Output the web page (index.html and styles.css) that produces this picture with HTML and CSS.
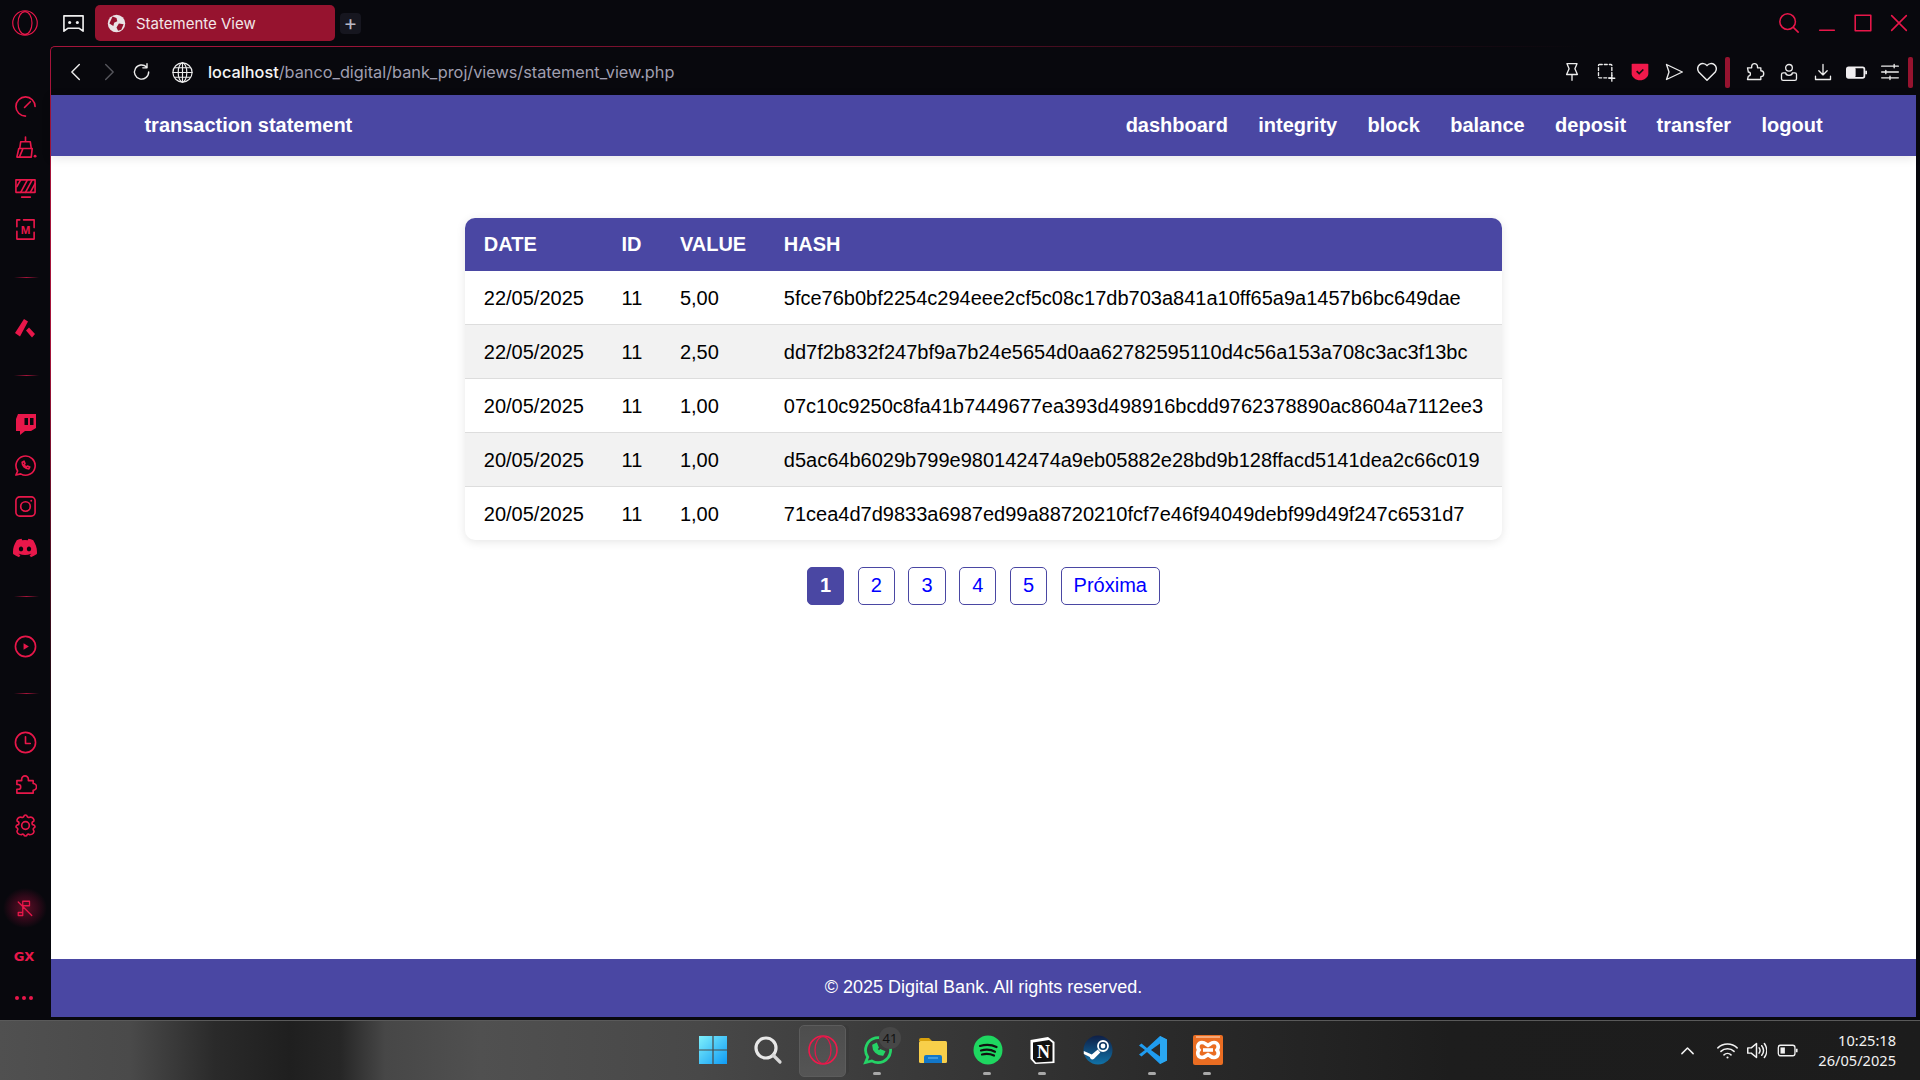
FILE: index.html
```html
<!DOCTYPE html>
<html lang="pt-BR">
<head>
  <meta charset="UTF-8">
  <title>Statemente View</title>
  <link rel="stylesheet" href="styles.css">
</head>
<body>
  <!-- Barra de abas -->
  <div class="tabbar">
    <svg class="ic logo" viewBox="0 0 24 24"><circle cx="12" cy="12" r="10.5"/><ellipse cx="12" cy="12" rx="6" ry="9.8"/></svg>
    <svg class="ic workspace" viewBox="0 0 24 24"><path d="M2 4h20v16l-4-3H6l-4 3z"/><circle cx="8" cy="11" r="1.6" class="solid"/><circle cx="16" cy="11" r="1.6" class="solid"/></svg>
    <div class="tab">
      <svg class="tab-icon" viewBox="0 0 24 24"><circle cx="12" cy="12" r="11" fill="#e9e3e5"/><path d="M7 3l5 2 1 4-4 2-1 4-5-3zM15 12l6 1-3 7-4 1-2-4z" fill="#96132f"/></svg>
      <span>Statemente View</span>
    </div>
    <div class="tab-add">+</div>
    <div class="win-controls">
      <svg class="ic win-search" viewBox="0 0 24 24"><circle cx="10.500" cy="10.500" r="8.500"/><path d="M17 17l5 5"/></svg>
      <svg class="ic" viewBox="0 0 24 24"><path d="M4 20h16"/></svg>
      <svg class="ic" viewBox="0 0 24 24"><rect x="3.500" y="3.500" width="17" height="17"/></svg>
      <svg class="ic" viewBox="0 0 24 24"><path d="M4 4l16 16M20 4L4 20"/></svg>
    </div>
  </div>

  <div class="shell">
    <!-- Barra lateral do navegador -->
    <aside class="sidebar">
      <div class="side-item"><svg class="ic" viewBox="0 0 24 24"><path d="M12 22A10 10 0 1 1 22 12"/><path d="M11 13l6-6"/></svg></div>
      <div class="side-item"><svg class="ic" viewBox="0 0 24 24"><path d="M12 1v5M7 6h10l1 7H6zM5 13h14l-1 9H3zM9 14l-3 7"/><circle cx="22" cy="21" r="1.500" class="solid"/></svg></div>
      <div class="side-item"><svg class="ic" viewBox="0 0 24 24"><rect x="2" y="3" width="20" height="13"/><path d="M7 16l7-13M12 16l7-13M3 10l4-7M17 16l5-9M8 21h9"/></svg></div>
      <div class="side-item"><svg class="ic" viewBox="0 0 24 24"><path d="M6 2H3v7M3 14v8h18v-7M21 10V2H10"/><text x="12" y="16.500" class="chip-m">M</text></svg></div>
      <div class="side-line line-a"></div>
      <div class="side-item"><svg class="ic-fill" viewBox="0 0 24 24"><path d="M2 17L11 3l4 2.500-8 15zM13 14.500l3-3 6 6.500-3 3.500z"/></svg></div>
      <div class="side-line line-b"></div>
      <div class="side-item wide first-after"><svg class="ic-fill" viewBox="0 0 24 24"><path fill-rule="evenodd" d="M5 2h18v14l-5 3h-6l-5 4v-4H3V7zM11.500 6v7h3.500V6zM17 6v7h3.500V6z"/></svg></div>
      <div class="side-item wide"><svg class="ic" viewBox="0 0 24 24"><path d="M2 22l1.800-4.300A10 10 0 1 1 7 20.700z"/><path d="M8.500 8.500c0 4 3 7 7 7l1-2-2.500-1-1 1c-1-.5-2-1.500-2.500-2.500l1-1-1-2.500z"/></svg></div>
      <div class="side-item wide"><svg class="ic" viewBox="0 0 24 24"><rect x="2" y="2" width="20" height="20" rx="4"/><circle cx="12" cy="12" r="5"/><circle cx="18" cy="6" r="1" class="solid"/></svg></div>
      <div class="side-item wide"><svg class="ic-fill" viewBox="0 0 24 24"><path d="M20.317 4.370a19.791 19.791 0 0 0-4.885-1.515.074.074 0 0 0-.079.037c-.21.375-.444.864-.608 1.250a18.270 18.270 0 0 0-5.487 0 12.640 12.640 0 0 0-.617-1.250.077.077 0 0 0-.079-.037A19.736 19.736 0 0 0 3.677 4.370a.07.07 0 0 0-.032.027C.533 9.046-.32 13.580.099 18.057a.082.082 0 0 0 .031.057 19.900 19.900 0 0 0 5.993 3.030.078.078 0 0 0 .084-.028 14.090 14.090 0 0 0 1.226-1.994.076.076 0 0 0-.041-.106 13.107 13.107 0 0 1-1.872-.892.077.077 0 0 1-.008-.128 10.200 10.200 0 0 0 .372-.292.074.074 0 0 1 .077-.01c3.928 1.793 8.180 1.793 12.062 0a.074.074 0 0 1 .078.01c.12.098.246.198.373.292a.077.077 0 0 1-.006.127 12.299 12.299 0 0 1-1.873.892.077.077 0 0 0-.041.107c.36.698.772 1.362 1.225 1.993a.076.076 0 0 0 .084.028 19.839 19.839 0 0 0 6.002-3.030.077.077 0 0 0 .032-.054c.5-5.177-.838-9.674-3.549-13.660a.061.061 0 0 0-.031-.03zM8.020 15.330c-1.183 0-2.157-1.085-2.157-2.419 0-1.333.956-2.419 2.157-2.419 1.210 0 2.176 1.096 2.157 2.420 0 1.333-.956 2.418-2.157 2.418zm7.975 0c-1.183 0-2.157-1.085-2.157-2.419 0-1.333.955-2.419 2.157-2.419 1.210 0 2.176 1.096 2.157 2.420 0 1.333-.946 2.418-2.157 2.418z"/></svg></div>
      <div class="side-line line-c"></div>
      <div class="side-item play"><svg class="ic" viewBox="0 0 24 24"><circle cx="12" cy="12" r="10.500"/><path d="M10 8.500v7l5.500-3.500z" class="solid"/></svg></div>
      <div class="side-line line-d"></div>
      <div class="side-item wide clock"><svg class="ic" viewBox="0 0 24 24"><circle cx="12" cy="12" r="10.500"/><path d="M12 6v7h5"/></svg></div>
      <div class="side-item wide"><svg class="ic" viewBox="0 0 24 24"><path d="M3 8h5V6.500a3.500 3.500 0 0 1 7 0V8h5v3a3.500 3.500 0 0 1 0 7v3H3v-4h1.500a2.500 2.500 0 0 0 0-5H3z"/></svg></div>
      <div class="side-item wide"><svg class="ic" viewBox="0 0 24 24"><path d="M10.325 2.317c.426-1.756 2.924-1.756 3.350 0a1.724 1.724 0 0 0 2.573 1.066c3.543-.94 5.310 2.826 4.370 4.370a1.724 1.724 0 0 0 0 3.572c1.756 1.426 1.756 2.924 0 3.350a1.724 1.724 0 0 0 0 2.573c.94 1.543-.826 4.310-4.370 4.370a1.724 1.724 0 0 0-2.572 0c-.426 1.756-2.924 1.756-3.350 0a1.724 1.724 0 0 0-2.573 0c-3.543-.06-5.310-2.826-4.370-4.370a1.724 1.724 0 0 0 0-2.572c-1.756-.426-1.756-1.924 0-3.350a1.724 1.724 0 0 0 0-3.573c-.94-1.543.826-5.310 4.370-4.370a1.724 1.724 0 0 0 2.572-1.065z"/><circle cx="12" cy="12" r="4"/></svg></div>
      <div class="side-bottom">
        <div class="side-music"><svg class="ic" viewBox="0 0 24 24"><path d="M9 18V3h9v6H9M3 18h6v4H3zM3 4l18 18"/></svg></div>
        <div class="side-item side-gx">GX</div>
        <div class="side-item side-dots"><i></i><i></i><i></i></div>
      </div>
    </aside>

    <div class="frame">
      <!-- Barra de endereco -->
      <div class="addressbar">
        <div class="addr-btn"><svg class="ic" viewBox="0 0 24 24"><path d="M16 3l-9 9 9 9"/></svg></div>
        <div class="addr-btn off"><svg class="ic" viewBox="0 0 24 24"><path d="M8 3l9 9-9 9"/></svg></div>
        <div class="addr-btn"><svg class="ic" viewBox="0 0 24 24"><path d="M20 12a8.500 8.500 0 1 1-2.500-6M18 2v5h-5"/></svg></div>
        <svg class="ic addr-globe" viewBox="0 0 24 24"><circle cx="12" cy="12" r="10"/><ellipse cx="12" cy="12" rx="4.500" ry="10"/><path d="M12 2v20M2 12h20M3.500 7h17M3.500 17h17"/></svg>
        <div class="url"><b>localhost</b>/banco_digital/bank_proj/views/statement_view.php</div>
        <div class="addr-tools">
          <div class="tool"><svg class="ic" viewBox="0 0 24 24"><path d="M6 2h12l-2.500 6 3 7h-13l3-7zM12 15v7"/></svg></div>
          <div class="tool"><svg class="ic dashed" viewBox="0 0 24 24"><rect x="3" y="3" width="16" height="16" rx="1"/><path d="M19 16v7M15.500 19.500h7" class="plain"/></svg></div>
          <div class="tool"><svg viewBox="0 0 24 24" class="tool-svg"><path d="M3 2h18a1 1 0 0 1 1 1v11c0 4-5 8-10 8S2 18 2 14V3a1 1 0 0 1 1-1z" fill="#f0194b"/><path d="M8 11l3 3 5-5" fill="none" stroke="#111" stroke-width="2"/></svg></div>
          <div class="tool"><svg class="ic" viewBox="0 0 24 24"><path d="M3 3l19 9-19 9 3-9z"/></svg></div>
          <div class="tool"><svg class="ic heart" viewBox="0 0 24 24"><path d="M12 21L3 12a5.500 5.500 0 0 1 9-7 5.500 5.500 0 0 1 9 7z"/></svg></div>
          <div class="addr-sep first"></div>
          <div class="tool"><svg class="ic" viewBox="0 0 24 24"><path d="M3 7h5V5.500a3.500 3.500 0 0 1 7 0V7h4v3.500a3.500 3.500 0 0 1 0 7V21H3l1-4a2.500 2.500 0 0 0 0-5L3 7z"/></svg></div>
          <div class="tool"><svg class="ic" viewBox="0 0 24 24"><circle cx="12" cy="7" r="4"/><path d="M8 13H5c-1 0-2 1-2 2v5c0 1 1 2 2 2h14c1 0 2-1 2-2v-5c0-1-1-2-2-2h-3c0 2-1.500 3-4 3s-4-1-4-3z"/></svg></div>
          <div class="tool"><svg class="ic" viewBox="0 0 24 24"><path d="M12 3v12M7 10.500l5 5 5-5M3 17v4h18v-4"/></svg></div>
          <div class="tool"><svg viewBox="0 0 24 24" class="tool-battery"><rect x="1" y="6" width="20" height="12" rx="2" fill="none" stroke="#f0eef0" stroke-width="2"/><rect x="1" y="6" width="10" height="12" rx="2" fill="#f0eef0"/><rect x="22" y="10" width="2" height="4" fill="#f0eef0"/></svg></div>
          <div class="tool"><svg class="ic" viewBox="0 0 24 24"><path d="M2 5h20M2 12h20M2 19h20"/><path d="M17 3v4M7 10v4M12 17v4"/></svg></div>
          <div class="addr-sep"></div>
        </div>
      </div>

      <header class="page-header">
        <div class="page-title">transaction statement</div>
        <nav class="page-nav">
          <span>dashboard</span>
          <span>integrity</span>
          <span>block</span>
          <span>balance</span>
          <span>deposit</span>
          <span>transfer</span>
          <span>logout</span>
        </nav>
      </header>

      <main class="page-main">
        <table class="statement">
          <thead>
            <tr><th>DATE</th><th>ID</th><th>VALUE</th><th>HASH</th></tr>
          </thead>
          <tbody>
            <tr><td>22/05/2025</td><td>11</td><td>5,00</td><td>5fce76b0bf2254c294eee2cf5c08c17db703a841a10ff65a9a1457b6bc649dae</td></tr>
            <tr><td>22/05/2025</td><td>11</td><td>2,50</td><td>dd7f2b832f247bf9a7b24e5654d0aa62782595110d4c56a153a708c3ac3f13bc</td></tr>
            <tr><td>20/05/2025</td><td>11</td><td>1,00</td><td>07c10c9250c8fa41b7449677ea393d498916bcdd9762378890ac8604a7112ee3</td></tr>
            <tr><td>20/05/2025</td><td>11</td><td>1,00</td><td>d5ac64b6029b799e980142474a9eb05882e28bd9b128ffacd5141dea2c66c019</td></tr>
            <tr><td>20/05/2025</td><td>11</td><td>1,00</td><td>71cea4d7d9833a6987ed99a88720210fcf7e46f94049debf99d49f247c6531d7</td></tr>
          </tbody>
        </table>
        <div class="pagination">
          <a href="#" class="current">1</a>
          <a href="#">2</a>
          <a href="#">3</a>
          <a href="#">4</a>
          <a href="#">5</a>
          <a href="#">Próxima</a>
        </div>
      </main>

      <footer class="page-footer">© 2025 Digital Bank. All rights reserved.</footer>
    </div>
  </div>

  <!-- Barra de tarefas -->
  <div class="taskbar">
    <div></div>
    <div class="task-apps">
      <div class="app">
        <svg viewBox="0 0 30 30" class="app-svg"><defs><linearGradient id="win" x1="0" y1="0" x2="1" y2="1"><stop offset="0" stop-color="#7ff0fb"/><stop offset="1" stop-color="#0f9bf5"/></linearGradient></defs><path d="M1 1h13.400v13.400H1zM15.600 1H29v13.400H15.600zM1 15.600h13.400V29H1zM15.600 15.600H29V29H15.600z" fill="url(#win)"/></svg>
      </div>
      <div class="app">
        <svg viewBox="0 0 30 30" class="app-svg"><circle cx="13" cy="13" r="10" fill="none" stroke="#e8e8e8" stroke-width="3.200"/><path d="M20 20l7 7" stroke="#d8d8d8" stroke-width="3.200" stroke-linecap="round"/></svg>
      </div>
      <div class="app app-open">
        <svg viewBox="0 0 30 30" class="app-svg"><circle cx="15" cy="15" r="14" fill="none" stroke="#f0194b" stroke-width="1.600"/><ellipse cx="15" cy="15" rx="8" ry="13.400" fill="none" stroke="#e0184a" stroke-width="1.300"/></svg>
      </div>
      <div class="app has-dot">
        <svg viewBox="0 0 24 24" class="app-svg wa"><path d="M2 22l1.800-4.300A10 10 0 1 1 7 20.700z"/><path d="M8.500 8.500c0 4 3 7 7 7l1-2-2.500-1-1 1c-1-.5-2-1.500-2.500-2.500l1-1-1-2.500z" fill="#25d366"/></svg>
        <span class="app-badge">41</span>
      </div>
      <div class="app">
        <svg viewBox="0 0 30 30" class="app-svg"><path d="M1 5a2 2 0 0 1 2-2h8l3 3h-13z" fill="#d9a10c"/><rect x="1" y="6" width="28" height="22" rx="1.500" fill="#f8cf4a"/><path d="M6 28v-6a2 2 0 0 1 2-2h14a2 2 0 0 1 2 2v6z" fill="#1277c9"/><path d="M10 23h10" stroke="#6fc0f2" stroke-width="1"/></svg>
      </div>
      <div class="app has-dot">
        <svg viewBox="0 0 30 30" class="app-svg"><circle cx="15" cy="15" r="14.500" fill="#1ed760"/><path d="M7 11c6-1.700 12-1.200 16.500 1M8 15.500c5-1.300 10-1 14 1.200M9 19.500c4.300-1 8-.8 12 1" fill="none" stroke="#111" stroke-width="2.200" stroke-linecap="round"/></svg>
      </div>
      <div class="app has-dot">
        <svg viewBox="0 0 30 30" class="app-svg"><path d="M2.500 5L20 2l6.500 5v21L7 29l-4.500-5z" fill="#fff"/><path d="M5 7.500L21 5l3.500 3V26.500L8 27.500 5 24z" fill="#111"/><text x="15.500" y="22.500" class="notion-n">N</text></svg>
      </div>
      <div class="app">
        <svg viewBox="0 0 30 30" class="app-svg"><defs><linearGradient id="steam" x1="0.500" y1="0" x2="0.500" y2="1"><stop offset="0" stop-color="#0f1f46"/><stop offset="1" stop-color="#1072a8"/></linearGradient></defs><circle cx="15" cy="15" r="14.500" fill="url(#steam)"/><circle cx="20" cy="11" r="5" fill="none" stroke="#fff" stroke-width="1.800"/><circle cx="20" cy="11" r="2.400" fill="#fff"/><path d="M0.800 16l8 3.500 6-5 2.500 3-6.500 6.500c-2 1-3.500 0-4-2l-6-3z" fill="#fff"/></svg>
      </div>
      <div class="app has-dot">
        <svg viewBox="0 0 30 30" class="app-svg"><path d="M22 1l7 3.500v21L22 29 9 17l-5.500 4.500L1 19.500 7 15 1 10.500l2.500-2L9 13z" fill="#1f9cf0"/><path d="M22 8.500L13 15l9 6.500z" fill="#2b2b2b"/><path d="M22 1l7 3.500v21L22 29z" fill="#2aa6f0"/></svg>
      </div>
      <div class="app has-dot">
        <svg viewBox="0 0 30 30" class="app-svg"><rect width="30" height="30" rx="2" fill="#ea6d22"/><rect x="3" y="1" width="24" height="2" fill="#f6a878"/><path d="M9 7.500c3 0 4 2 6 3 2-1 3-3 6-3 4 0 5.500 4.500 3 7.500 2.500 3 1 7.500-3 7.500-3 0-4-2-6-3-2 1-3 3-6 3-4 0-5.500-4.500-3-7.500-2.500-3-1-7.500 3-7.500z" fill="none" stroke="#fff" stroke-width="3.600"/><path d="M10 15h10" stroke="#fff" stroke-width="3.600"/></svg>
      </div>
    </div>
    <div class="tray">
      <svg class="ic tray-chevron" viewBox="0 0 24 24"><path d="M3 17l9-9 9 9"/></svg>
      <svg class="ic tray-wifi" viewBox="0 0 24 24"><path d="M1 9c6-6 16-6 22 0M4.500 13c4-4 11-4 15 0M8 17c2.200-2 5.800-2 8 0"/><circle cx="12" cy="20" r="1.200" class="solid"/></svg>
      <svg class="ic tray-sound" viewBox="0 0 24 24"><path d="M2 9h4l6-5v16l-6-5H2zM15 9c1.300 1.800 1.300 4.200 0 6M18 6.500c2.500 3.300 2.500 7.700 0 11M21 4c3.500 4.800 3.500 11.200 0 16"/></svg>
      <svg class="tray-battery" viewBox="0 0 24 24"><rect x="1.500" y="6" width="19" height="12" rx="2.500" fill="none" stroke="#f2f2f2" stroke-width="1.500"/><rect x="4" y="8.500" width="5" height="7" fill="#f2f2f2"/><rect x="21.500" y="10" width="2" height="4" fill="#f2f2f2"/></svg>
      <div class="tray-clock">
        <div>10:25:18</div>
        <div>26/05/2025</div>
      </div>
    </div>
  </div>
</body>
</html>
```

FILE: styles.css
```css
* {
  box-sizing: border-box;
}

body {
  margin: 0;
  width: 1920px;
  height: 1080px;
  display: flex;
  flex-direction: column;
  overflow: hidden;
  background: #08080d;
  font-family: 'Liberation Sans', Arial, sans-serif;
  color: #000;
}

/* iconos de linea */
.ic {
  width: 22px;
  height: 22px;
  fill: none;
  stroke: currentColor;
  stroke-width: 1.7;
  stroke-linejoin: round;
  stroke-linecap: round;
}

.ic .solid {
  fill: currentColor;
  stroke: none;
}

.ic-fill {
  width: 24px;
  height: 24px;
  fill: #e8174a;
}

/* barra de abas */
.tabbar {
  height: 46px;
  flex-shrink: 0;
  display: flex;
  align-items: center;
  color: #e8174a;
}

.logo {
  width: 28px;
  height: 28px;
  margin-left: 11px;
  stroke-width: 1;
}

.workspace {
  width: 23px;
  height: 23px;
  margin-left: 23px;
  color: #f0f0f0;
}

.tab {
  width: 240px;
  height: 36px;
  margin-left: 10px;
  padding-left: 12px;
  display: flex;
  align-items: center;
  gap: 10px;
  background: #96132f;
  border-radius: 5px;
  color: #f2e6e8;
  font-family: Inter, sans-serif;
  font-size: 15px;
}

.tab-icon {
  width: 19px;
  height: 19px;
}

.tab-add {
  width: 21px;
  height: 21px;
  margin-left: 5px;
  background: #16161f;
  border-radius: 4px;
  color: #b8b8c4;
  font-family: Inter, sans-serif;
  font-size: 21px;
  line-height: 19px;
  text-align: center;
}

.win-controls {
  margin-left: auto;
  margin-right: 10px;
  display: flex;
  gap: 14px;
}

.win-search {
  margin-right: 2px;
}

/* estructura */
.shell {
  flex: 1;
  display: flex;
  min-height: 0;
}

.sidebar {
  width: 50px;
  flex-shrink: 0;
  padding-top: 40px;
  padding-bottom: 2px;
  display: flex;
  flex-direction: column;
  color: #e8174a;
}

.side-item {
  height: 41px;
  display: flex;
  align-items: center;
  justify-content: center;
  flex-shrink: 0;
}

.side-item.wide {
  height: 41.5px;
}

.side-item .ic {
  width: 23px;
  height: 23px;
}

.side-line {
  height: 1px;
  width: 25px;
  margin-left: 14px;
  flex-shrink: 0;
  background: linear-gradient(90deg, transparent, #a5143a, transparent);
}

.line-a { margin-top: 27px; margin-bottom: 29px; }
.line-b { margin-top: 27px; margin-bottom: 27px; }
.line-c { margin-top: 27px; margin-bottom: 29px; }
.line-d { margin-top: 26px; margin-bottom: 28px; }

.chip-m {
  font-family: 'Liberation Sans', sans-serif;
  font-size: 12px;
  font-weight: bold;
  fill: #e8174a;
  stroke: none;
  text-anchor: middle;
}

.side-bottom {
  margin-top: auto;
}

.side-music {
  width: 44px;
  height: 40px;
  margin: 0 auto 8px;
  display: flex;
  align-items: center;
  justify-content: center;
  background: radial-gradient(closest-side, #5c0f24 0%, #33091a 55%, transparent 100%);
}

.side-music .ic {
  width: 18px;
  height: 18px;
}

.side-gx {
  font-family: 'DejaVu Sans', sans-serif;
  font-size: 13px;
  font-weight: bold;
  padding-right: 2px;
}

.side-dots {
  gap: 3px;
  padding-right: 2px;
}

.side-dots i {
  width: 4px;
  height: 4px;
  border-radius: 50%;
  background: #e8174a;
}

.frame {
  flex: 1;
  min-width: 0;
  display: flex;
  flex-direction: column;
  position: relative;
  border-top: 1px solid #a5143a;
  border-left: 1px solid #a5143a;
  border-top-left-radius: 5px;
  padding-bottom: 3px;
}

/* desvanecen la linea roja del marco */
.frame::before {
  content: "";
  position: absolute;
  top: -1px;
  left: 200px;
  right: 0;
  height: 1px;
  background: linear-gradient(90deg, rgba(8, 8, 13, 0), #08080d 80%);
}

.frame::after {
  content: "";
  position: absolute;
  left: -1px;
  top: 300px;
  bottom: 0;
  width: 1px;
  background: linear-gradient(rgba(8, 8, 13, 0), #08080d 60%);
}

.addressbar {
  height: 48px;
  flex-shrink: 0;
  display: flex;
  align-items: center;
  padding: 2px 7px 0 8px;
  color: #ececec;
}

.addr-btn {
  width: 33px;
  display: flex;
  justify-content: center;
}

.addr-btn .ic {
  width: 20px;
  height: 20px;
}

.addr-btn.off {
  color: #55555c;
}

.addr-globe {
  width: 23px;
  height: 23px;
  margin-left: 13px;
  stroke-width: 1.200;
}

.url {
  margin-left: 14px;
  font-family: Inter, sans-serif;
  font-size: 16.270px;
  color: #a09fb0;
}

.url b {
  font-weight: 500;
  color: #f5f5f5;
}

.addr-tools {
  margin-left: auto;
  display: flex;
  align-items: center;
}

.tool {
  width: 33.750px;
  display: flex;
  justify-content: center;
}

.tool .ic {
  width: 20px;
  height: 20px;
  stroke-width: 1.600;
}

.tool-svg {
  width: 20px;
  height: 20px;
}

.tool-battery {
  width: 21px;
  height: 21px;
}

.tool .heart {
  width: 22px;
  height: 22px;
}

.dashed rect {
  stroke-dasharray: 3.500 2.500;
}

.addr-sep {
  width: 5px;
  height: 31px;
  margin-left: 1px;
  background: #96132f;
  border-radius: 2px;
}

.addr-sep.first {
  margin-right: 8px;
}

.page-header {
  height: 61px;
  margin-right: 4px;
  flex-shrink: 0;
  display: flex;
  align-items: center;
  justify-content: space-between;
  padding: 0 5%;
  background: #4a47a3;
  box-shadow: 0 2px 10px rgba(0, 0, 0, 0.1);
  color: #fff;
  font-size: 20px;
  font-weight: bold;
  position: relative;
}

.page-nav {
  display: flex;
  gap: 30.400px;
}

.page-main {
  flex: 1;
  margin-right: 4px;
  padding-top: 62px;
  display: flex;
  flex-direction: column;
  align-items: center;
  background: #fff;
}

.statement {
  width: 1037px;
  border-collapse: collapse;
  border-radius: 10px;
  overflow: hidden;
  box-shadow: 0 2px 10px rgba(0, 0, 0, 0.1);
  font-size: 20px;
}

.statement th {
  padding: 15px 18.800px;
  background: #4a47a3;
  color: #fff;
  text-align: left;
}

.statement td {
  padding: 16px 18.800px 14px;
  border-bottom: 1px solid #ddd;
}

.statement tbody tr:nth-child(even) {
  background: #f2f2f2;
}

.statement tbody tr:last-child td {
  border-bottom: none;
}

.pagination {
  margin-top: 27px;
  display: flex;
  gap: 13.600px;
}

.pagination a {
  padding: 6px 12px 8px;
  line-height: 22px;
  font-size: 20px;
  color: #00f;
  text-decoration: none;
  border: 1px solid #4a47a3;
  border-radius: 5px;
}

.pagination .current {
  background: #4a47a3;
  color: #fff;
  font-weight: bold;
}

.page-footer {
  height: 58px;
  margin-right: 4px;
  flex-shrink: 0;
  display: flex;
  align-items: center;
  justify-content: center;
  padding-bottom: 2px;
  background: #4a47a3;
  color: #fff;
  font-size: 18px;
}

/* barra de tarefas */
.taskbar {
  height: 60px;
  flex-shrink: 0;
  display: grid;
  grid-template-columns: 1fr auto 1fr;
  align-items: center;
  border-top: 1px solid #5a5a5a;
  background: linear-gradient(90deg, #505050 0, #4a4a4a 130px, #2a2a2a 215px, #1f1f1f 290px, #262626 340px, #474747 385px, #505050 480px, #484848 700px, #3a3a3a 900px, #2b2b2b 1150px, #1d1d1d 1450px, #1c1c1c 100%);
}

.task-apps {
  display: flex;
}

.app {
  width: 55px;
  height: 59px;
  padding-bottom: 2px;
  display: flex;
  align-items: center;
  justify-content: center;
  position: relative;
}

.app-svg {
  width: 30px;
  height: 30px;
}

.wa {
  fill: none;
  stroke: #25d366;
  stroke-width: 2.200;
}

.app-open::before {
  content: "";
  position: absolute;
  left: 5px;
  top: 4px;
  width: 49px;
  height: 50px;
  background: #3a3a3a;
  border-radius: 5px;
  z-index: 0;
}

.app-open::after {
  content: "";
  position: absolute;
  left: 4px;
  top: 4px;
  width: 45px;
  height: 50px;
  background: linear-gradient(#4d4d4d, #555);
  border: 1px solid #5c5c5c;
  border-radius: 5px;
}

.app-open svg {
  position: relative;
  z-index: 1;
}

.has-dot::after {
  content: "";
  position: absolute;
  left: 23px;
  bottom: 5px;
  width: 8px;
  height: 3px;
  border-radius: 2px;
  background: #a8a8a8;
}

.app-badge {
  position: absolute;
  top: 6px;
  left: 29px;
  width: 22px;
  height: 22px;
  border-radius: 50%;
  background: #474747;
  color: #111;
  font-family: 'Noto Sans', sans-serif;
  font-size: 13px;
  line-height: 22px;
  text-align: center;
}

.notion-n {
  font-family: 'Liberation Serif', serif;
  font-size: 18px;
  font-weight: bold;
  fill: #fff;
  text-anchor: middle;
}

.tray {
  display: flex;
  align-items: center;
  justify-content: flex-end;
  padding-right: 24px;
  color: #f2f2f2;
}

.tray-chevron {
  width: 15px;
  height: 15px;
  stroke-width: 2.400;
}

.tray-wifi {
  width: 21px;
  height: 21px;
  margin-left: 22px;
}

.tray-sound {
  width: 21px;
  height: 21px;
  margin-left: 8px;
}

.tray-battery {
  width: 21px;
  height: 21px;
  margin-left: 10px;
}

.tray-clock {
  margin-left: 20px;
  padding-bottom: 2px;
  font-family: 'Noto Sans', sans-serif;
  font-size: 14.600px;
  line-height: 20px;
  text-align: right;
}
```
